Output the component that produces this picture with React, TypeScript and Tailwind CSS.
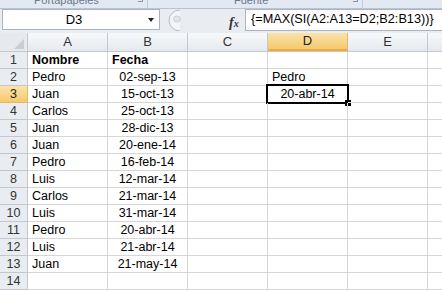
const data: [string, string, string, string][] = [
  ["Nombre", "Fecha", "", ""],
  ["Pedro", "02-sep-13", "", "Pedro"],
  ["Juan", "15-oct-13", "", "20-abr-14"],
  ["Carlos", "25-oct-13", "", ""],
  ["Juan", "28-dic-13", "", ""],
  ["Juan", "20-ene-14", "", ""],
  ["Pedro", "16-feb-14", "", ""],
  ["Luis", "12-mar-14", "", ""],
  ["Carlos", "21-mar-14", "", ""],
  ["Luis", "31-mar-14", "", ""],
  ["Pedro", "20-abr-14", "", ""],
  ["Luis", "21-abr-14", "", ""],
  ["Juan", "21-may-14", "", ""],
  ["", "", "", ""],
];

const cols = ["A", "B", "C", "D", "E"];

function ColHeader({ label, active }: { label: string; active?: boolean }) {
  return (
    <div
      className={`flex h-full w-[80px] shrink-0 items-center justify-center border-r text-[13px] ${
        active
          ? "border-[#e3b866] border-b-2 border-b-[#f0a93a] bg-gradient-to-b from-[#fbe3a9] to-[#f4c96d] text-[#222]"
          : "border-[#c3c8ce] bg-gradient-to-b from-[#f8f9fb] to-[#e5e9ee] text-[#333]"
      }`}
    >
      {label}
    </div>
  );
}

function Row({ n, cells }: { n: number; cells: [string, string, string, string] }) {
  const active = n === 3;
  return (
    <div className="flex h-[17px] shrink-0">
      <div
        className={`flex w-[28px] shrink-0 items-center justify-center border-r border-b text-[12.5px] ${
          active
            ? "border-[#e3b866] bg-gradient-to-b from-[#fbe3a9] to-[#f4c96d] text-[#222]"
            : "border-[#c3c8ce] bg-[#e9edf2] text-[#333]"
        }`}
      >
        {n}
      </div>
      {cols.map((c, i) => {
        const v = i < 4 ? cells[i] : "";
        const isDate = /\d/.test(v);
        const selected = c === "D" && active;
        return (
          <div
            key={c}
            className={`relative flex w-[80px] shrink-0 items-end border-r border-b border-[#d6d6d6] px-[4px] leading-[16px] text-[12.5px] text-black ${
              isDate ? "justify-center" : "justify-start"
            } ${n === 1 ? "font-bold" : ""}`}
          >
            {v}
            {selected && (
              <div className="absolute -left-[2px] -top-[2px] h-[20px] w-[83px] border-[2.5px] border-black">
                <div className="absolute -right-[4px] -bottom-[4px] h-[6px] w-[6px] bg-black" />
              </div>
            )}
          </div>
        );
      })}
      <div className="flex-1 border-b border-[#d6d6d6]" />
    </div>
  );
}

export default function App() {
  return (
    <div className="h-[290px] w-[442px] overflow-hidden bg-white font-['Liberation_Sans',Arial,sans-serif]">
      {/* ribbon group labels, cut at top */}
      <div className="flex h-[9px] overflow-hidden border-b border-[#b8c4d3] bg-[#e2e9f2] text-[11px] leading-[12px] text-[#6a7a8e]">
        <div className="relative w-[148px] shrink-0 border-r border-[#c2ccd9]">
          <span className="absolute left-[34px] -top-[6px]">Portapapeles</span>
          <span className="absolute right-[4px] -top-[3px] h-[5px] w-[5px] border-r border-b border-[#8796aa]" />
        </div>
        <div className="relative w-[215px] shrink-0 border-r border-[#c2ccd9]">
          <span className="absolute left-[86px] -top-[6px]">Fuente</span>
          <span className="absolute right-[4px] -top-[3px] h-[5px] w-[5px] border-r border-b border-[#8796aa]" />
        </div>
        <div className="flex-1" />
      </div>

      {/* formula bar */}
      <div className="flex h-[24px] items-start bg-[#e9edf2]">
        <div className="relative ml-[2px] flex h-[21px] w-[158px] items-center justify-center border border-[#aab3be] bg-white text-[13px] text-black">
          <span className="mr-[14px]">D3</span>
          <span className="absolute right-[5px] top-[8px] h-0 w-0 border-x-[3.5px] border-t-[4px] border-x-transparent border-t-[#222]" />
        </div>
        <div className="relative ml-[2px] h-[22px] w-[83px]">
          <svg width="83" height="22" viewBox="0 0 83 22" className="absolute left-0 top-0">
            <path d="M18 1 A11 10.5 0 0 0 18 22" fill="#f3f5f8" stroke="#b4bcc6" strokeWidth="1" />
            <ellipse cx="15" cy="10" rx="3.5" ry="3" fill="#e2e6eb" stroke="#c4cad2" strokeWidth="0.8" />
          </svg>
          <span className="absolute left-[67px] top-[3px] font-['Liberation_Serif',serif] text-[14px] italic font-bold text-[#333]">
            f<span className="text-[10px]">x</span>
          </span>
        </div>
        <div className="flex h-[22px] flex-1 items-center border border-r-0 border-[#aab3be] bg-white pl-[5px] text-[12.7px] text-black">
          {"{=MAX(SI(A2:A13=D2;B2:B13))}"}
        </div>
      </div>

      {/* column headers */}
      <div className="flex h-[19px] border-b border-[#c3c8ce]">
        <div className="relative w-[28px] shrink-0 border-r border-[#c3c8ce] bg-[#e6eaef]">
          <svg width="10" height="10" viewBox="0 0 10 10" className="absolute bottom-[2px] right-[3px]">
            <path d="M10 0 L10 10 L0 10 Z" fill="#c9ced4" />
          </svg>
        </div>
        {cols.map((c) => (
          <ColHeader key={c} label={c} active={c === "D"} />
        ))}
        <div className="flex-1 bg-gradient-to-b from-[#f8f9fb] to-[#e5e9ee]" />
      </div>

      {/* rows */}
      <div className="flex flex-col">
        {data.map((r, i) => (
          <Row key={i} n={i + 1} cells={r} />
        ))}
      </div>
    </div>
  );
}
